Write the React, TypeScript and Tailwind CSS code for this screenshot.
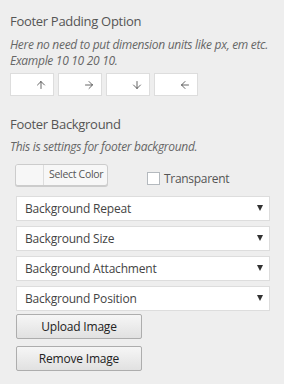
import { ArrowUp, ArrowRight, ArrowDown, ArrowLeft } from "lucide-react"

const selects = ["Background Repeat", "Background Size", "Background Attachment", "Background Position"]

function PaddingInput({ icon }: { icon: React.ReactNode }) {
  return (
    <div className="flex h-[23px] w-[44px] items-center justify-end border border-[#dddddd] bg-white pr-[6px] text-[#333]">
      {icon}
    </div>
  )
}

function SelectBox({ label }: { label: string }) {
  return (
    <div className="flex h-[25px] w-[254px] items-center justify-between border border-[#dddddd] bg-white pl-[8px] pr-[6px] text-[12px] text-[#444] tracking-[-0.2px]">
      <span>{label}</span>
      <svg width="6" height="6" viewBox="0 0 6 6" className="mb-[1px]">
        <path d="M0 0h6L3 6z" fill="#333" />
      </svg>
    </div>
  )
}

function WinButton({ label }: { label: string }) {
  return (
    <button className="flex h-[25px] w-[126px] items-center justify-center rounded-[2px] border border-[#adadad] bg-gradient-to-b from-[#f6f6f6] to-[#e1e1e1] text-[12px] text-[#222] tracking-[-0.2px]">
      {label}
    </button>
  )
}

export default function App() {
  return (
    <div className="h-[384px] w-[284px] bg-[#eeeeee] px-[10px] pt-[11px] font-['Open_Sans',sans-serif] text-[#555]">
      <h2 className="text-[13px] leading-[20px] text-[#555] tracking-[-0.3px]">Footer Padding Option</h2>
      <p className="mt-[6px] text-[12px] italic leading-[16px] text-[#666] tracking-[-0.3px]">
        Here no need to put dimension units like px, em etc.
        <br />
        Example 10 10 20 10.
      </p>
      <div className="mt-[4px] flex gap-[4px]">
        <PaddingInput icon={<ArrowUp size={12} strokeWidth={1.5} />} />
        <PaddingInput icon={<ArrowRight size={12} strokeWidth={1.5} />} />
        <PaddingInput icon={<ArrowDown size={12} strokeWidth={1.5} />} />
        <PaddingInput icon={<ArrowLeft size={12} strokeWidth={1.5} />} />
      </div>

      <h2 className="mt-[18px] text-[13px] leading-[20px] text-[#555] tracking-[-0.3px]">Footer Background</h2>
      <p className="mt-[5px] text-[12px] italic leading-[16px] text-[#666] tracking-[-0.3px]">
        This is settings for footer background.
      </p>

      <div className="mt-[9px] flex items-start pl-[5px]">
        <div className="flex h-[22px] w-[93px] items-center overflow-hidden rounded-[3px] border border-[#cccccc] bg-[#f7f7f7] shadow-[0_1px_0_#cccccc]">
          <div className="h-full w-[28px] border-r border-[#dddddd] bg-[#f7f7f7]" />
          <span className="pl-[5px] text-[10.5px] text-[#555] tracking-[-0.3px]">Select Color</span>
        </div>
        <label className="ml-[39px] mt-[8px] flex h-[13px] items-center gap-[4px] text-[12px] text-[#555] tracking-[-0.3px]">
          <span className="block h-[13px] w-[13px] border border-[#b4b9be] bg-white" />
          Transparent
        </label>
      </div>

      <div className="mt-[10px] flex flex-col gap-[5px] pl-[6px]">
        {selects.map((s) => (
          <SelectBox key={s} label={s} />
        ))}
      </div>

      <div className="mt-[3px] flex flex-col gap-[7px] pl-[6px]">
        <WinButton label="Upload Image" />
        <WinButton label="Remove Image" />
      </div>
    </div>
  )
}
